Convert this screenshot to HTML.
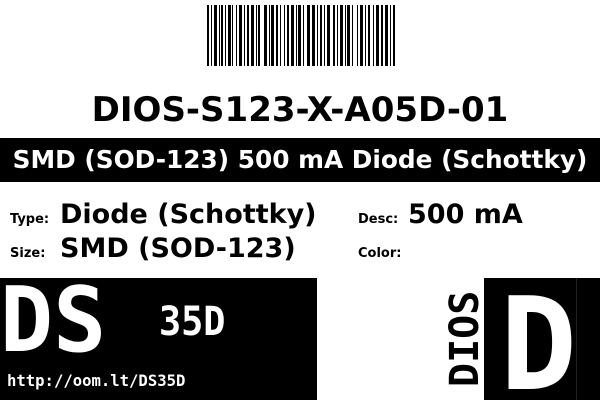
<!DOCTYPE html>
<html><head><meta charset="utf-8"><style>
body{margin:0;width:600px;height:400px;background:#fff;position:relative;overflow:hidden;font-family:"DejaVu Sans",sans-serif}
.a{position:absolute;white-space:nowrap;line-height:1}
.m{font-family:"DejaVu Sans Mono",monospace;font-weight:bold}
</style></head><body>
<svg class="a" style="left:207px;top:5px" width="190" height="61">
<g fill="#000">
<rect x="0" y="0" width="2" height="61"/><rect x="4" y="0" width="1" height="61"/><rect x="7" y="0" width="3" height="61"/><rect x="12" y="0" width="1" height="61"/><rect x="14" y="0" width="2" height="61"/><rect x="18" y="0" width="1" height="61"/><rect x="21" y="0" width="3" height="61"/><rect x="25" y="0" width="1" height="61"/>
<rect x="29" y="0" width="1" height="61"/><rect x="32" y="0" width="3" height="61"/><rect x="37" y="0" width="1" height="61"/><rect x="40" y="0" width="2" height="61"/><rect x="44" y="0" width="3" height="61"/><rect x="49" y="0" width="1" height="61"/><rect x="51" y="0" width="2" height="61"/>
<rect x="57" y="0" width="3" height="61"/><rect x="62" y="0" width="1" height="61"/><rect x="64" y="0" width="3" height="61"/><rect x="69" y="0" width="2" height="61"/><rect x="73" y="0" width="1" height="61"/>
<rect x="77" y="0" width="1" height="61"/><rect x="80" y="0" width="2" height="61"/><rect x="84" y="0" width="3" height="61"/><rect x="89" y="0" width="1" height="61"/><rect x="91" y="0" width="3" height="61"/><rect x="96" y="0" width="1" height="61"/>
<rect x="100" y="0" width="3" height="61"/><rect x="105" y="0" width="3" height="61"/><rect x="110" y="0" width="1" height="61"/><rect x="113" y="0" width="2" height="61"/><rect x="117" y="0" width="1" height="61"/><rect x="120" y="0" width="3" height="61"/>
<rect x="126" y="0" width="2" height="61"/><rect x="130" y="0" width="1" height="61"/><rect x="133" y="0" width="3" height="61"/><rect x="138" y="0" width="1" height="61"/><rect x="140" y="0" width="3" height="61"/><rect x="145" y="0" width="1" height="61"/>
<rect x="150" y="0" width="1" height="61"/><rect x="153" y="0" width="3" height="61"/><rect x="158" y="0" width="1" height="61"/><rect x="161" y="0" width="2" height="61"/><rect x="166" y="0" width="1" height="61"/><rect x="169" y="0" width="3" height="61"/>
<rect x="174" y="0" width="2" height="61"/><rect x="178" y="0" width="3" height="61"/><rect x="183" y="0" width="1" height="61"/><rect x="186" y="0" width="2" height="61"/>
</g></svg>
<div class="a" style="left:0;width:600px;text-align:center;top:93px;font-size:34px;font-weight:bold">DIOS-S123-X-A05D-01</div>
<div class="a" style="left:0;top:138px;width:600px;height:44px;background:#000;color:#fff;text-align:center;font-size:24.8px;font-weight:bold;line-height:44px">SMD (SOD-123) 500 mA Diode (Schottky)</div>
<div class="a" style="left:10px;top:213px;font-size:13px;font-weight:bold">Type:</div>
<div class="a" style="left:60px;top:201px;font-size:27px;font-weight:bold">Diode (Schottky)</div>
<div class="a" style="left:10px;top:247px;font-size:13px;font-weight:bold">Size:</div>
<div class="a" style="left:60px;top:235px;font-size:27px;font-weight:bold">SMD (SOD-123)</div>
<div class="a" style="left:358px;top:213px;font-size:13px;font-weight:bold">Desc:</div>
<div class="a" style="left:408px;top:201px;font-size:27px;font-weight:bold">500 mA</div>
<div class="a" style="left:358px;top:247px;font-size:13px;font-weight:bold">Color:</div>
<div class="a" style="left:0;top:278px;width:317px;height:122px;background:#000"></div>
<div class="a m" style="left:0;top:276px;font-size:90px;color:#fff;transform-origin:0 0;transform:scaleX(0.98)">DS</div>
<div class="a m" style="left:159px;top:302px;font-size:40px;color:#fff;transform-origin:0 0;transform:scaleX(0.92)">35D</div>
<div class="a m" style="left:7px;top:374px;font-size:15.6px;color:#fff">http://oom.lt/DS35D</div>
<div class="a" style="left:484px;top:278px;width:116px;height:122px;background:#000"></div>
<div class="a" style="left:576px;top:278px;width:1px;height:122px;background:#222"></div>
<div class="a m" style="left:500px;top:282px;font-size:128px;color:#fff">D</div>
<div class="a m" style="left:445px;top:387px;font-size:40px;transform-origin:0 0;transform:rotate(-90deg)">DIOS</div>
</body></html>
